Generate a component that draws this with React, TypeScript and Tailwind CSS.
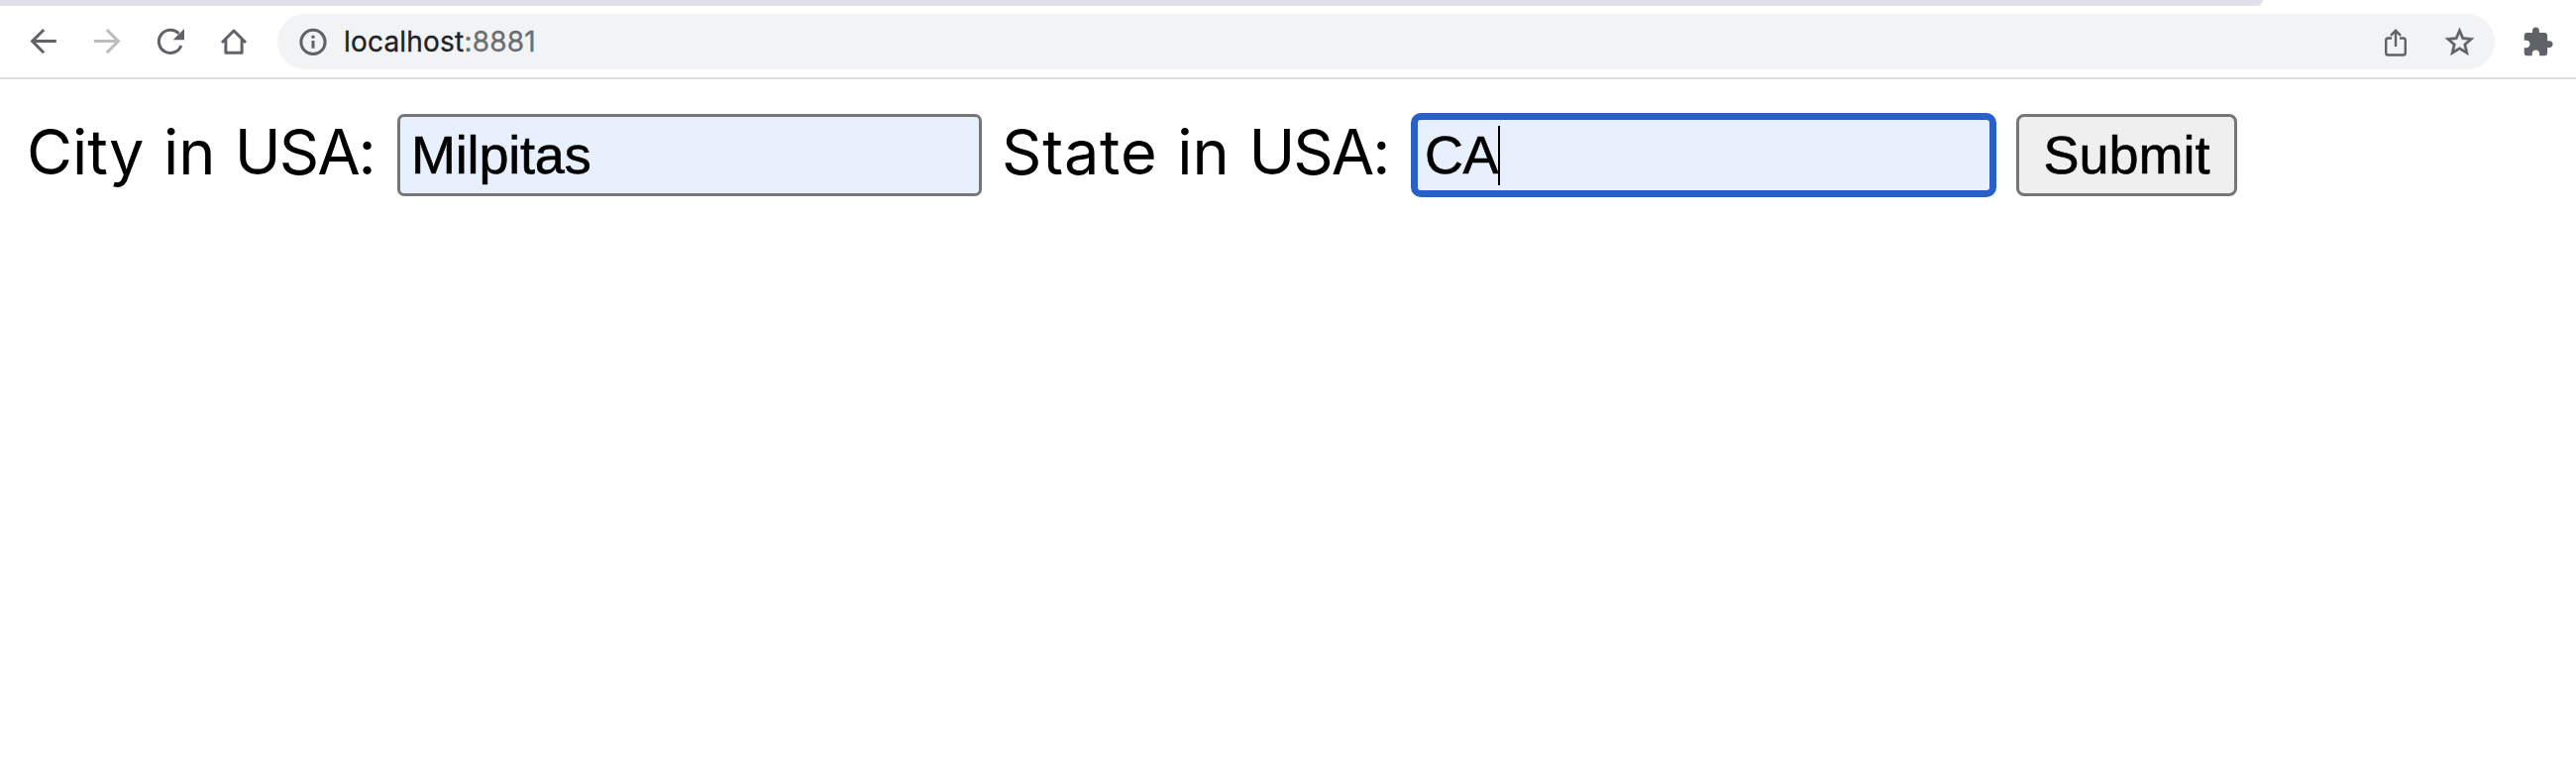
import type { ReactNode } from 'react';

function ToolIcon({ children, className = 'text-[#5f6368]' }: { children: ReactNode; className?: string }) {
  return (
    <svg
      viewBox="0 0 64 72"
      className={`h-[72px] w-16 shrink-0 ${className}`}
      fill="none"
      stroke="currentColor"
      strokeWidth="3"
    >
      {children}
    </svg>
  );
}

function Toolbar() {
  return (
    <header className="h-20 border-b-2 border-[#dadce0]">
      <div className="h-1.5 w-[2284px] rounded-br-[14px] bg-[#dee1e6]" />
      <div className="flex h-[72px] items-center pl-3">
        <ToolIcon>
          <path d="M44.8 35.6H21M32.2 24L20.6 35.6L32.2 47.2" />
        </ToolIcon>
        <ToolIcon className="text-[#babcbe]">
          <path d="M19 35.6H43M31.8 24L43.4 35.6L31.8 47.2" />
        </ToolIcon>
        <ToolIcon>
          <path d="M42.8 40A11.6 11.6 0 1 1 40.4 27.9" />
          <path d="M46 23V34.3H34.7Z" fill="currentColor" stroke="none" />
        </ToolIcon>
        <ToolIcon>
          <path d="M20 37L32 25L44 37M23.9 34V47.2H40.1V34" strokeLinejoin="round" />
        </ToolIcon>
        <div className="ml-3 flex h-14 w-[2238px] items-center rounded-full bg-[#f1f3f4] pl-[22px] pr-[18px]">
          <svg viewBox="0 0 28 28" className="h-7 w-7" fill="none" stroke="#5f6368" strokeWidth="3">
            <circle cx="14" cy="14.4" r="12.1" />
            <path d="M14 13V20.8M14 7.8V10.8" />
          </svg>
          <span className="ml-[17px] flex-1 font-[Inter] text-[28px] leading-none tracking-[0.2px] text-[#202124] [-webkit-text-stroke:0.3px]">
            localhost<span className="text-[#6b6e72]">:8881</span>
          </span>
          <svg viewBox="0 0 28 32" className="mr-[33px] mt-0.5 h-8 w-7" fill="none" stroke="#5f6368" strokeWidth="2.4">
            <path d="M10 11.5H6.5Q4.2 11.5 4.2 13.8V26.2Q4.2 28.5 6.5 28.5H21.5Q23.8 28.5 23.8 26.2V13.8Q23.8 11.5 21.5 11.5H18" />
            <path d="M14 20V4M9 8.8L14 3.8L19 8.8" />
          </svg>
          <svg viewBox="0 0 24 24" className="h-[35px] w-[35px]" fill="#5f6368" stroke="#5f6368" strokeWidth="0.3">
            <path d="M22 9.24l-7.19-.62L12 2 9.19 8.63 2 9.24l5.46 4.73L5.82 21 12 17.27 18.18 21l-1.63-7.03L22 9.24zM12 15.4l-3.76 2.27 1-4.28-3.32-2.88 4.38-.38L12 6.1l1.71 4.04 4.38.38-3.32 2.88 1 4.28L12 15.4z" />
          </svg>
        </div>
        <svg viewBox="0 0 24 24" className="ml-[27px] h-[33px] w-[33px]" fill="#5f6368">
          <path d="M20.5 11H19V7c0-1.1-.9-2-2-2h-4V3.5C13 2.12 11.88 1 10.5 1S8 2.12 8 3.5V5H4c-1.1 0-1.99.9-1.99 2v3.8H3.5c1.49 0 2.7 1.21 2.7 2.7s-1.21 2.7-2.7 2.7H2V20c0 1.1.9 2 2 2h3.8v-1.5c0-1.49 1.21-2.7 2.7-2.7 1.49 0 2.7 1.21 2.7 2.7V22H17c1.1 0 2-.9 2-2v-4h1.5c1.38 0 2.5-1.12 2.5-2.5S21.88 11 20.5 11z" />
        </svg>
      </div>
    </header>
  );
}

export default function App() {
  return (
    <div className="h-[774px] w-[2600px] overflow-hidden bg-white text-black">
      <Toolbar />
      <main className="flex items-start pl-[27px] pt-[34px]">
        <div className="mt-px h-[83px] w-[374px] whitespace-nowrap font-[Inter] text-[63px] leading-[76px] [word-spacing:1.7px]">
          City in <span className="tracking-[-2px]">USA:</span>
        </div>
        <div className="mt-px flex h-[83px] w-[590px] items-center rounded-[7px] border-[3px] border-[#767676] bg-[#e8f0fe] pb-0.5 pl-[11px] font-['Liberation_Sans'] text-[54px] leading-none tracking-[-0.2px] [-webkit-text-stroke:0.6px]">
          Milpitas
        </div>
        <div className="ml-[20px] mt-px h-[83px] w-[413px] whitespace-nowrap font-[Inter] text-[63px] leading-[76px] [word-spacing:2px]">
          <span className="tracking-[0.8px]">State</span> in <span className="tracking-[-2px]">USA:</span>
        </div>
        <div className="flex h-[85px] w-[591px] items-center rounded-[10px] border-[7px] border-[#285fc8] bg-[#e8f0fe] pl-[7px] font-['Liberation_Sans'] text-[54px] leading-none [-webkit-text-stroke:0.6px]">
          <span className="pb-0.5 tracking-[-0.5px]">CA</span>
          <span className="h-[60px] w-0.5 bg-black" />
        </div>
        <div className="ml-5 mt-px flex h-[83px] w-[223px] items-center justify-center rounded-[8px] border-[3px] border-[#767676] bg-[#efefef] pb-0.5 font-['Liberation_Sans'] text-[54px] leading-none [-webkit-text-stroke:0.6px]">
          Submit
        </div>
      </main>
    </div>
  );
}
